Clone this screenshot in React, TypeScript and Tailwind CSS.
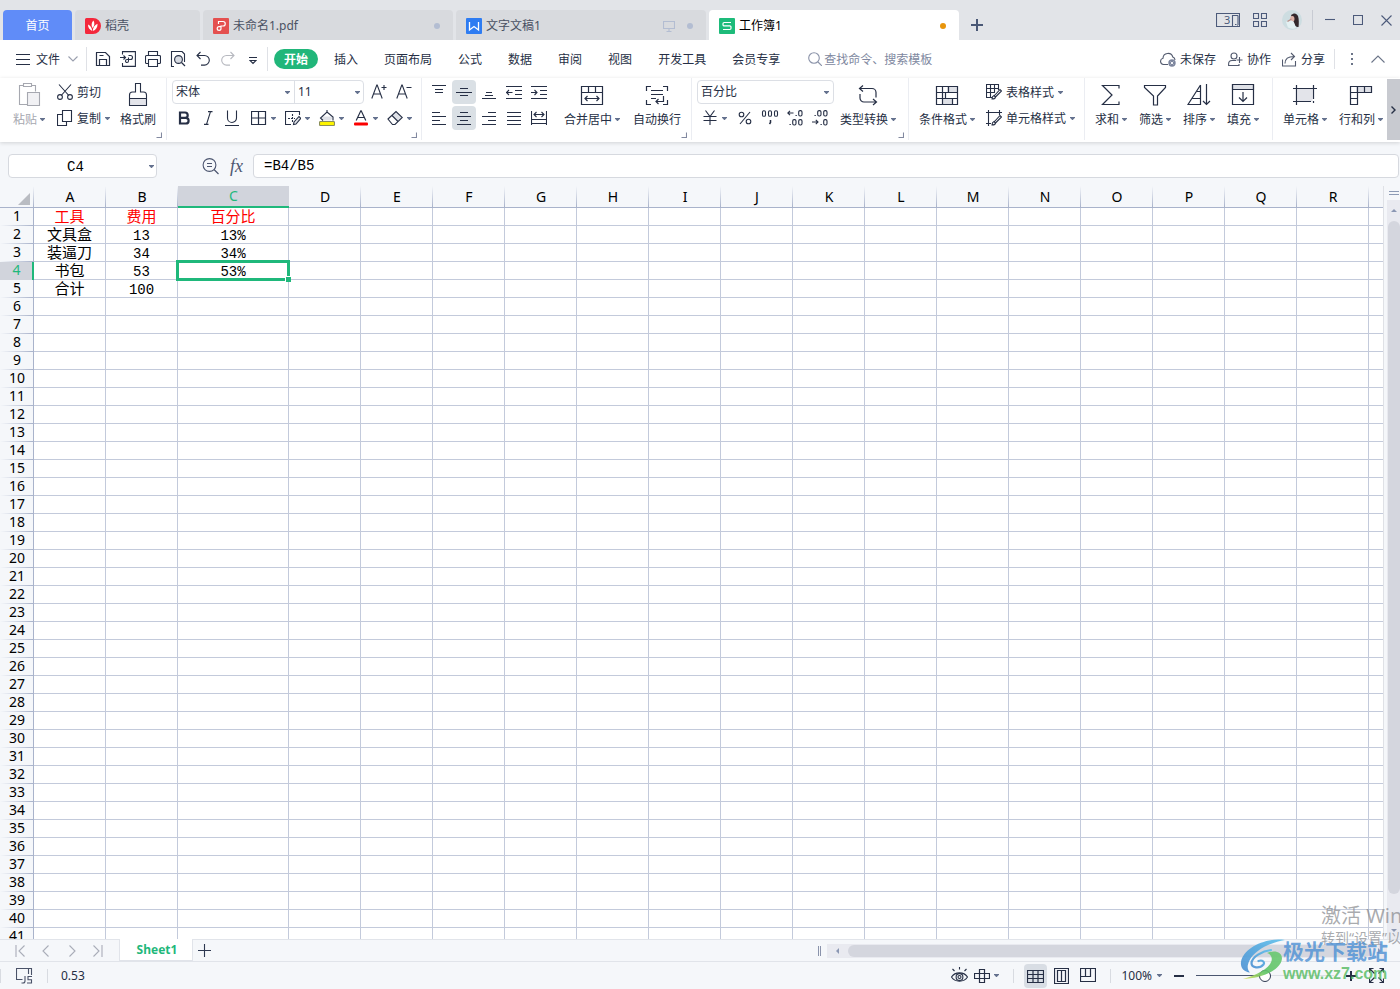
import React from 'react';

type IconProps = { w?: number; h?: number; className?: string; children: React.ReactNode };

const Icon = ({ w = 16, h = w, className = '', children }: IconProps) => (
  <svg
    width={w}
    height={h}
    viewBox={`0 0 ${w} ${h}`}
    fill="none"
    stroke="currentColor"
    strokeWidth="1.1"
    className={`shrink-0 ${className}`}
    aria-hidden="true"
  >
    {children}
  </svg>
);

const Caret = ({ className = '' }: { className?: string }) => (
  <svg width="5" height="3" viewBox="0 0 5 3" className={`shrink-0 ${className}`} fill="#64718e" aria-hidden="true">
    <path d="M0 0h5v.8L2.8 3h-.6L0 .8z" />
  </svg>
);

const Big = ({ icon, label, caret = true, muted = false }: { icon: React.ReactNode; label: string; caret?: boolean; muted?: boolean }) => (
  <button className={`flex shrink-0 flex-col items-center gap-1 pt-1 ${muted ? 'text-[#a6a8b0]' : 'text-[#262f45]'}`}>
    {icon}
    <span className="flex items-center gap-[3px] whitespace-nowrap leading-4">
      {label}
      {caret && <Caret />}
    </span>
  </button>
);

const Row = ({ icon, label, caret = true }: { icon: React.ReactNode; label: string; caret?: boolean }) => (
  <button className="flex h-6 items-center gap-1 whitespace-nowrap">
    {icon}
    {label}
    {caret && <Caret />}
  </button>
);

const Small = ({ children, label, active = false }: { children: React.ReactNode; label: string; active?: boolean }) => (
  <button aria-label={label} className={`flex h-6 w-6 shrink-0 items-center justify-center rounded-sm ${active ? 'bg-[#dae0e5]' : ''}`}>
    {children}
  </button>
);

const Split = ({ children, label }: { children: React.ReactNode; label: string }) => (
  <button aria-label={label} className="flex h-6 w-[34px] shrink-0 items-center justify-center gap-1">
    {children}
    <Caret />
  </button>
);

const Group = ({ className, launcher = false, children }: { className: string; launcher?: boolean; children: React.ReactNode }) => (
  <div className={`relative flex h-[62px] shrink-0 items-start border-r border-[#ebedf2] pt-px ${className}`}>
    {children}
    {launcher && (
      <button aria-label="更多设置" className="absolute right-1 bottom-0.5">
        <Icon w={6} className="text-[#8289a0]">
          <path d="M.5 5.5h5v-5" />
        </Icon>
      </button>
    )}
  </div>
);

const Lines = ({ rows }: { rows: [number, number, number][] }) => (
  <Icon>
    <path d={rows.map(([x1, x2, y]) => `M${x1} ${y}.5H${x2}`).join('')} strokeWidth="1.2" />
  </Icon>
);

const ribbonSelect =
  "h-full w-full appearance-none bg-transparent pl-[3px] font-['Noto_Sans','Noto_Sans_CJK_SC',sans-serif] text-xs text-[#262f45] outline-none";

function TitleBar() {
  const tab = 'flex h-[30px] shrink-0 items-center rounded-t bg-[#d8dade] pt-0.5 text-[#4a5163]';
  return (
    <header className="flex h-10 shrink-0 items-end bg-[#e2e4e8] pl-[3px]">
      <nav className="flex gap-[3px]">
        <button className="h-[30px] w-[69px] rounded-t bg-[#608cf8] pt-0.5 text-white">首页</button>
        <button className={`${tab} w-[125px] gap-1 pl-2.5`}>
          <svg width="16" height="16" viewBox="0 0 16 16" className="shrink-0">
            <path d="M1.5 0H8a8 8 0 1 1 0 16H1.5A1.5 1.5 0 0 1 0 14.5V1.5A1.5 1.5 0 0 1 1.5 0z" fill="#f4283c" />
            <path d="M7.2 13C4.500 11.500 3 10 3 6.500 5.500 7.500 7 10 7.200 13zM7.400 10C6 7 6.500 4.500 8.500 2.500 10 5.500 9.500 8 7.400 10zM7.800 13C8 9.500 9.500 7 12.500 5.800 12.800 9.500 11 12 7.800 13z" fill="#fff" />
          </svg>
          稻壳
        </button>
        <button className={`${tab} w-[250px] gap-1 pr-[13px] pl-2.5`}>
          <svg width="16" height="16" viewBox="0 0 16 16" className="shrink-0">
            <rect width="16" height="16" rx="1" fill="#e4504f" />
            <path d="M5.5 6V3.500H10a2.200 2.200 0 0 1 0 4.500H8v2.500A1.900 1.900 0 1 1 6.100 8.600H8" fill="none" stroke="#fff" strokeWidth="1.200" />
          </svg>
          未命名1.pdf
          <i className="ml-auto h-1.5 w-1.5 rounded-full bg-[#b3bdd2]" />
        </button>
        <button className={`${tab} w-[250px] gap-1 pr-[13px] pl-2.5`}>
          <svg width="16" height="16" viewBox="0 0 16 16" className="shrink-0">
            <rect width="16" height="16" rx="1" fill="#2e7cf2" />
            <path d="M3.500 4v8L8 8.500l4.500 3.500V4" fill="none" stroke="#fff" strokeWidth="1.300" />
          </svg>
          文字文稿1
          <Icon w={12} className="ml-auto text-[#b3bdd2]">
            <path d="M.5 1.500h11v7H.5zM6 8.500v3M3.500 11.500h5" />
          </Icon>
          <i className="ml-2 h-1.5 w-1.5 rounded-full bg-[#b3bdd2]" />
        </button>
        <button className="flex h-[30px] w-[250px] shrink-0 items-center gap-1 rounded-t bg-white pt-0.5 pr-[13px] pl-2.5 text-black">
          <svg width="16" height="16" viewBox="0 0 16 16" className="shrink-0">
            <rect width="16" height="16" rx="1" fill="#1dbb7a" />
            <path d="M12 4.500H5.200a1.200 1.200 0 0 0-1.200 1.200v1a1.200 1.200 0 0 0 1.200 1.200h5.600A1.200 1.200 0 0 1 12 9.100v1.200a1.200 1.200 0 0 1-1.200 1.200H4" fill="none" stroke="#fff" strokeWidth="1.200" />
          </svg>
          工作簿1
          <i className="ml-auto h-1.5 w-1.5 rounded-full bg-[#e8950c]" />
        </button>
      </nav>
      <button aria-label="新建标签" className="mb-[9px] ml-3 text-[#4a5876]">
        <Icon w={12}>
          <path d="M6 0v12M0 6h12" strokeWidth="2" />
        </Icon>
      </button>
      <div className="mr-2 ml-auto flex h-10 items-center text-[#4c5a7a]">
        <button aria-label="窗口切换">
          <Icon w={24} h={14}>
            <path d="M.5.5h23v13H.5zM16.500 13V2.500h5.500M22 2.500V13M19 11.500h1.500" />
            <text x="8" y="11" fontSize="11" fill="#4c5a7a" stroke="none" fontFamily="Noto Sans">3</text>
          </Icon>
        </button>
        <button aria-label="应用" className="ml-[13px]">
          <Icon w={14}>
            <path d="M.5.5h5v5h-5zM8.500.5h5v5h-5zM.5 8.500h5v5h-5zM8.500 8.500h5v5h-5z" />
          </Icon>
        </button>
        <button aria-label="账户" className="ml-[15px]">
          <svg width="20" height="20" viewBox="0 0 20 20">
            <circle cx="10" cy="10" r="10" fill="#cddde1" />
            <path d="M9 5c3-2.500 5.500-2 7 1 1 3 1 8 .5 11-2 .5-3.500-1-4.500-4z" fill="#33282c" />
            <path d="M9 6.500c2-1 3.500 0 3.500 2.500S11 12 9.500 11.500 7.500 7.500 9 6.500z" fill="#dcb3a8" />
            <path d="M4 12c3-2 6-2 8 .5l2 5.500a10 10 0 0 1-8-.5z" fill="#e3f0f2" />
            <path d="M5.500 11.500L9.500 9" stroke="#b98c86" strokeWidth="1.300" />
          </svg>
        </button>
        <i className="ml-2.5 h-5 w-px bg-[#c8cbd3]" />
        <button aria-label="最小化" className="ml-3">
          <Icon w={10}>
            <path d="M0 4.500h10" />
          </Icon>
        </button>
        <button aria-label="最大化" className="ml-[18px]">
          <Icon w={10}>
            <path d="M.5.5h9v9h-9z" />
          </Icon>
        </button>
        <button aria-label="关闭" className="ml-[18px]">
          <Icon w={11}>
            <path d="M.5.5l10 10M10.500.5l-10 10" />
          </Icon>
        </button>
      </div>
    </header>
  );
}

function MenuBar() {
  const tabs = ['开始', '插入', '页面布局', '公式', '数据', '审阅', '视图', '开发工具', '会员专享'];
  return (
    <div className="flex h-[38px] shrink-0 items-center whitespace-nowrap bg-white pr-[15px] pl-4 font-['Noto_Sans_CJK_SC',sans-serif]">
      <button className="flex items-center gap-1.5">
        <Icon w={14}>
          <path d="M0 2.500h14M0 7.500h14M0 12.500h14" />
        </Icon>
        文件
        <Icon w={10} h={6} className="ml-0.5 text-[#9a9fae]">
          <path d="M.5.5L5 5 9.500.5" />
        </Icon>
      </button>
      <i className="ml-2 h-6 w-px bg-[#dfe1e6]" />
      <div className="ml-2 flex items-center gap-[9px]">
        <button aria-label="保存">
          <Icon>
            <path d="M1 1.500h9.500l4 4v9H1.500v-13M4.500 14V8.500h7V14M4.500 4.500h4" strokeWidth="1.200" />
          </Icon>
        </button>
        <button aria-label="输出为PDF">
          <Icon>
            <path d="M2.500 3.500V.6h12.900v14.800H2.500V12M0 6.500h5.500M3.500 4.500l2 2-2 2M8.500 4.500h2a2 2 0 0 1 0 4h-2v1.500a1.500 1.500 0 1 1-1.500-1.500h1.500V6.500" />
          </Icon>
        </button>
        <button aria-label="打印">
          <Icon>
            <path d="M3.500 4.500v-4h9v4M3.500 12.500h-2a1 1 0 0 1-1-1v-6a1 1 0 0 1 1-1h13a1 1 0 0 1 1 1v6a1 1 0 0 1-1 1h-2M3.500 8.500h9v7h-9z" />
          </Icon>
        </button>
        <button aria-label="打印预览">
          <Icon>
            <path d="M4 15.500H1.500V.5H12L14.500 3v8" />
            <circle cx="8.500" cy="8.500" r="3.900" fill="#d8dbe2" />
            <path d="M11.500 11.500l3.500 3.500" strokeWidth="1.300" />
          </Icon>
        </button>
        <button aria-label="撤销">
          <Icon>
            <path d="M5.500 1L2 4.500 5.500 8M2 4.500h7.500a4.800 4.800 0 0 1 0 9.600H6" />
          </Icon>
        </button>
        <button aria-label="恢复" className="text-[#b7b9c0]">
          <Icon>
            <path d="M10.500 1L14 4.500 10.500 8M14 4.500H6.500a4.800 4.800 0 0 0 0 9.600H10" />
          </Icon>
        </button>
        <button aria-label="自定义" className="flex w-4 justify-center pt-1">
          <Icon w={8}>
            <path d="M0 .5h8M1 3.500h6L4 6.500z" />
          </Icon>
        </button>
      </div>
      <i className="ml-1.5 h-6 w-px bg-[#dfe1e6]" />
      <nav className="ml-1.5 flex gap-1.5">
        {tabs.map((t, i) => (
          <button key={t} className={`h-5 rounded-full px-2.5 ${i === 0 ? 'bg-[#21b67a] font-bold text-white' : ''}`}>
            {t}
          </button>
        ))}
      </nav>
      <label className="ml-[18px] flex items-center gap-0.5 text-[#8b93a9]">
        <Icon w={14}>
          <circle cx="6" cy="6" r="5.300" />
          <path d="M10 10l4 4" />
        </Icon>
        <input aria-label="搜索" placeholder="查找命令、搜索模板" className="w-32 bg-transparent outline-none placeholder:text-[#8088a0]" />
      </label>
      <div className="ml-auto flex items-center">
        <button className="flex items-center gap-1">
          <Icon className="text-[#525a6e]">
            <path d="M8 13.500H3.500a3.200 3.200 0 0 1-.5-6.300 5 5 0 0 1 9.800-1.200 3.200 3.200 0 0 1 2.200 3" />
            <circle cx="12" cy="12" r="3.700" fill="#7d869e" stroke="none" />
            <path d="M10.700 10.700l2.600 2.600M13.300 10.700l-2.600 2.600" stroke="#fff" strokeWidth=".9" />
          </Icon>
          未保存
        </button>
        <button className="ml-3 flex items-center gap-1">
          <Icon w={15} className="text-[#525a6e]">
            <circle cx="6" cy="4" r="3" />
            <path d="M8 8.500H4A3.500 3.500 0 0 0 .6 12v1.500H11V12M11.500 5v6M8.500 8h6" />
          </Icon>
          协作
        </button>
        <button className="ml-[11px] flex items-center gap-1">
          <Icon w={15} className="text-[#525a6e]">
            <path d="M.5 7.500v6.500h13V9M3 11.500C3 6.500 6 4.500 12 4.500M9 1l3.500 3.500L9 8" />
          </Icon>
          分享
        </button>
        <i className="ml-[9px] h-5 w-px bg-[#dfe1e6]" />
        <button aria-label="更多" className="ml-4">
          <svg width="2" height="12" viewBox="0 0 2 12" fill="#6b7488">
            <path d="M0 0h2v2H0zM0 5h2v2H0zM0 10h2v2H0z" />
          </svg>
        </button>
        <button aria-label="收起功能区" className="ml-[18px] text-[#6b7488]">
          <Icon w={14} h={8}>
            <path d="M.5 7.500L7 1l6.500 6.500" />
          </Icon>
        </button>
      </div>
    </div>
  );
}

function Ribbon() {
  return (
    <div className="z-10 flex h-16 shrink-0 overflow-hidden bg-white font-['Noto_Sans_CJK_SC',sans-serif] shadow-[0_1px_4px_rgba(0,0,0,0.15)]">
      <Group className="w-[167px] pl-[13px]" launcher>
        <Big
          muted
          label="粘贴"
          icon={
            <Icon w={24}>
              <path d="M6.500 2.500H2.500v19h8M14.500 2.500h4v6" />
              <path d="M6.500.5h8v3h-8z" />
              <path d="M10.500 9.500h12v13h-12z" fill="#f1f1f4" />
            </Icon>
          }
        />
        <div className="mt-px ml-3 flex flex-col gap-0.5">
          <Row
            label="剪切"
            caret={false}
            icon={
              <Icon>
                <path d="M2 .5l9.800 11M14 .5L4.200 11.500" />
                <circle cx="3" cy="13" r="2.400" />
                <circle cx="13" cy="13" r="2.400" />
              </Icon>
            }
          />
          <Row
            label="复制"
            icon={
              <Icon>
                <path d="M5.500.5h9v11h-9zM5.500 4.500h-5v11h9v-4" />
              </Icon>
            }
          />
        </div>
        <div className="ml-2.5 flex">
          <Big
            label="格式刷"
            caret={false}
            icon={
              <Icon w={24}>
                <path d="M3.500 15.500h17v7h-17z" fill="#e3e4ea" stroke="none" />
                <path d="M9.500.5h5v8.500h3a3 3 0 0 1 3 3v10.500h-17V12a3 3 0 0 1 3-3h3zM3.500 15.500h17" />
              </Icon>
            }
          />
        </div>
      </Group>

      <Group className="w-[255px] pl-[5px]" launcher>
        <div className="mt-px flex flex-col gap-0.5">
          <div className="flex h-6 items-center">
            <div className="flex h-6 w-[192px] rounded-sm border border-[#dcdfe5]">
              <div className="relative w-[122px] shrink-0 border-r border-[#dcdfe5]">
                <select aria-label="字体" className={ribbonSelect}>
                  <option>宋体</option>
                </select>
                <Caret className="pointer-events-none absolute top-[10px] right-1" />
              </div>
              <div className="relative flex-1">
                <select aria-label="字号" className={ribbonSelect}>
                  <option>11</option>
                </select>
                <Caret className="pointer-events-none absolute top-[10px] right-[3px]" />
              </div>
            </div>
            <div className="ml-[3px] flex gap-px">
              <Small label="增大字号">
                <Icon>
                  <path d="M.8 14.500L5.800 1h.4l5 13.500M2.500 10h7M10.500 3.500h5M13 1v5" />
                </Icon>
              </Small>
              <Small label="减小字号">
                <Icon>
                  <path d="M.8 14.500L5.800 1h.4l5 13.500M2.500 10h7M10.500 3.500h5" />
                </Icon>
              </Small>
            </div>
          </div>
          <div className="flex">
            <Small label="加粗">
              <Icon w={14}>
                <path d="M3 1.500h5a2.700 2.700 0 0 1 0 5.400H3zM3 6.900h5.800a2.800 2.800 0 0 1 0 5.600H3z" strokeWidth="2.200" />
              </Icon>
            </Small>
            <Small label="倾斜">
              <Icon w={14}>
                <path d="M7 .6h4.500M3 13.400h4.500M9.500.6L5.500 13.400" />
              </Icon>
            </Small>
            <Small label="下划线">
              <Icon w={16}>
                <path d="M3.500.5V8a4.500 4.500 0 0 0 9 0V.5M1 15.500h14" />
              </Icon>
            </Small>
            <div className="ml-0.5 flex">
              <Split label="边框">
                <Icon>
                  <path d="M.5 1.500h14v13H.5zM7.500 1.500v13M.5 8h14" strokeWidth="1.200" />
                </Icon>
              </Split>
              <Split label="绘图边框">
                <Icon>
                  <path d="M6 14.500H.5v-13h14V5" />
                  <path d="M7.500 4v8M3 8.500h7" strokeDasharray="2 1" />
                  <path d="M8.500 14.500l.5-2.500L14 6.500l1.800 1.800L11 14z" fill="#dfe1e7" />
                </Icon>
              </Split>
              <Split label="填充颜色">
                <Icon>
                  <path d="M3.500 6.500h9.500v2.500l-1.500 1.500h-7L3 9z" fill="#dfe1e7" stroke="none" />
                  <path d="M4 10.500L1.500 8 8 2l6 5v3.500M8 2V0" />
                  <rect x=".5" y="11.500" width="15" height="4" rx="1" fill="#fdf400" stroke="#8b8f5a" />
                </Icon>
              </Split>
              <Split label="字体颜色">
                <Icon>
                  <path d="M3.200 10.500L7.800.8h.4l4.600 9.700M5 7.500h6" strokeWidth="1.200" />
                  <rect x="1" y="12.500" width="14" height="3" rx="1" fill="#fb0000" stroke="none" />
                </Icon>
              </Split>
              <Split label="清除">
                <Icon>
                  <path d="M5 5.500L9 1.500 15.300 7.500 11 11.500z" fill="#dfe1e7" stroke="none" />
                  <path d="M1 9L9 1.500 15.300 7.500 8 14.500H5.500zM5 5.500l6 6" />
                </Icon>
              </Split>
            </div>
          </div>
        </div>
      </Group>

      <Group className="w-[270px] pl-[5px]" launcher>
        <div className="mt-px grid grid-cols-5 gap-x-px gap-y-0.5">
          <Small label="顶端对齐">
            <Lines rows={[[1, 15, 1], [4, 12, 5], [4, 12, 8]]} />
          </Small>
          <Small label="垂直居中" active>
            <Lines rows={[[4, 12, 4], [0, 16, 8], [4, 12, 11]]} />
          </Small>
          <Small label="底端对齐">
            <Lines rows={[[5, 11, 8], [4, 12, 11], [1, 15, 14]]} />
          </Small>
          <Small label="减少缩进">
            <Icon>
              <path d="M0 2.500h16M9 6.500h7M9 10.500h7M0 14.500h16M0 8.500h6.500M3 6L.5 8.500 3 11" />
            </Icon>
          </Small>
          <Small label="增加缩进">
            <Icon>
              <path d="M0 2.500h16M9 6.500h7M9 10.500h7M0 14.500h16M0 8.500h6M3.500 6L6 8.500 3.500 11" />
            </Icon>
          </Small>
          <Small label="左对齐">
            <Lines rows={[[1, 15, 14], [1, 9, 10], [1, 15, 6], [1, 9, 2]]} />
          </Small>
          <Small label="水平居中" active>
            <Lines rows={[[1, 15, 14], [4, 12, 10], [1, 15, 6], [4, 12, 2]]} />
          </Small>
          <Small label="右对齐">
            <Lines rows={[[1, 15, 14], [7, 15, 10], [1, 15, 6], [7, 15, 2]]} />
          </Small>
          <Small label="两端对齐">
            <Lines rows={[[1, 15, 14], [1, 15, 10], [1, 15, 6], [1, 15, 2]]} />
          </Small>
          <Small label="分散对齐">
            <Icon>
              <path d="M.5 1v14M15.500 1v14M1 9.500h14M1 13.500h14M3 4.500h10M5.500 2L3 4.500 5.500 7M10.500 2L13 4.500 10.500 7" />
            </Icon>
          </Small>
        </div>
        <div className="ml-[13px] flex gap-[13px]">
          <Big
            label="合并居中"
            icon={
              <Icon w={24}>
                <path d="M1.500 3.500h21v18h-21zM1.500 9.500h21M8.500 3.500v6M15.500 3.500v6M5 15.500h14M7.500 13L5 15.500 7.500 18M16.500 13l2.500 2.500-2.500 2.500" strokeWidth="1.200" />
              </Icon>
            }
          />
          <Big
            label="自动换行"
            caret={false}
            icon={
              <Icon w={24}>
                <path d="M6 3.500H1.500V8M18 3.500h4.500V8M6 21.500H1.500V17M18 21.500h4.500V17M6 7.500h12M6 11.500h12M6 15.500h5M18.500 13v5.500H11M13.500 16L11 18.500l2.500 2.500" strokeWidth="1.200" />
              </Icon>
            }
          />
        </div>
      </Group>

      <Group className="w-[217px] pl-[5px]" launcher>
        <div className="mt-px flex flex-col gap-0.5">
          <div className="relative h-6 w-[137px] rounded-sm border border-[#dcdfe5]">
            <select aria-label="数字格式" className={ribbonSelect}>
              <option>百分比</option>
            </select>
            <Caret className="pointer-events-none absolute top-[10px] right-1" />
          </div>
          <div className="flex gap-px">
            <Split label="货币">
              <Icon>
                <path d="M3.500.5L8 6.500l4.500-6M1.500 6.500h13M1.500 10.500h13M8 6.500v8.500" />
              </Icon>
            </Split>
            <div className="flex gap-px pl-px">
              <Small label="百分比样式">
                <Icon>
                  <circle cx="4.500" cy="4.500" r="2.300" />
                  <circle cx="11.500" cy="11.500" r="2.300" />
                  <path d="M13 2L3 14" />
                </Icon>
              </Small>
              <Small label="千位分隔">
                <Icon w={18} h={16}>
                  <rect x="1.500" y=".7" width="3" height="5.600" rx="1.400" />
                  <rect x="7.500" y=".7" width="3" height="5.600" rx="1.400" />
                  <rect x="13.500" y=".7" width="3" height="5.600" rx="1.400" />
                  <path d="M9.500 10v2.500L8.500 14" strokeWidth="1.500" />
                </Icon>
              </Small>
              <Small label="增加小数位">
                <Icon>
                  <rect x="11.700" y=".6" width="3.300" height="5.400" rx="1.400" />
                  <rect x="5.700" y="9.600" width="3.300" height="5.400" rx="1.400" />
                  <rect x="11.700" y="9.600" width="3.300" height="5.400" rx="1.400" />
                  <path d="M8.500 5.500h1.300M2.500 14.500h1.300M.5 3h6M3 .8L.8 3 3 5.200" />
                </Icon>
              </Small>
              <Small label="减少小数位">
                <Icon>
                  <rect x="5.700" y=".6" width="3.300" height="5.400" rx="1.400" />
                  <rect x="11.700" y=".6" width="3.300" height="5.400" rx="1.400" />
                  <rect x="11.700" y="9.600" width="3.300" height="5.400" rx="1.400" />
                  <path d="M2.500 5.500h1.300M8.500 14.500h1.300M0 12h6M3.800 9.800L6 12l-2.200 2.200" />
                </Icon>
              </Small>
            </div>
          </div>
        </div>
        <div className="ml-1.5 flex">
          <Big
            label="类型转换"
            icon={
              <Icon w={24}>
                <path d="M7 2.500L3.500 5.500 7 8.500M3.500 5.500H16a4 4 0 0 1 4 4v5M17 22l3.500-3L17 16M20.500 19H8a4 4 0 0 1-4-4v-4" strokeWidth="1.200" />
              </Icon>
            }
          />
        </div>
      </Group>

      <Group className="w-[176px] pl-2.5">
        <Big
          label="条件格式"
          icon={
            <Icon w={24}>
              <path d="M8 15h9v6H8zM12 3h10v6H12z" fill="#dfe1e7" stroke="none" />
              <path d="M1.500 3.500h21v18h-21zM1.500 9.500h21M1.500 15.500h21M7.500 3.500v18M13.500 3.500v6M10.500 9.500v6M17.500 15.500v6" strokeWidth="1.200" />
            </Icon>
          }
        />
        <div className="mt-px ml-[11px] flex flex-col gap-0.5">
          <Row
            label="表格样式"
            icon={
              <Icon>
                <path d="M6 13.500H.5V.5h12V6M.5 4.500h12M.5 8.500H9M4.500.5v13M8.500.5v8" />
                <path d="M6 15c0-2 .5-3 2-3.500l1.500 1.500C9.500 14.500 8 15 6 15zM8.500 11.500L14 5.500l1.500 1.500-6 6" fill="#fff" />
              </Icon>
            }
          />
          <Row
            label="单元格样式"
            icon={
              <Icon>
                <path d="M0 2.500h16M2.500 0v16M0 13.500h5M13.500 0v5" />
                <path d="M6 15c0-2 .5-3 2-3.500l1.500 1.500C9.500 14.500 8 15 6 15zM8.500 11.500L14 5.500l1.500 1.500-6 6" fill="#fff" />
              </Icon>
            }
          />
        </div>
      </Group>

      <Group className="w-[188px] gap-3 pl-2.5">
        <Big
          label="求和"
          icon={
            <Icon w={24}>
              <path d="M20 5.500V2.500H3.500l9.500 9.500-9.500 9.500H20v-3" strokeWidth="1.200" />
            </Icon>
          }
        />
        <Big
          label="筛选"
          icon={
            <Icon w={24}>
              <path d="M1.500 2.500h21v2l-8 8.500v9h-4V13l-9-8.500z" strokeWidth="1.200" />
            </Icon>
          }
        />
        <Big
          label="排序"
          icon={
            <Icon w={24}>
              <path d="M13.500 2v19.500H1L13.500 2M10 8.500h3.500M5.500 15.500h8M19.500 1v20M16 18l3.500 3.500L23 18" strokeWidth="1.200" />
            </Icon>
          }
        />
        <Big
          label="填充"
          icon={
            <Icon w={24}>
              <path d="M1.500 1.500h21v5h-21z" fill="#dfe1e7" />
              <path d="M1.500 1.500h21v20h-21zM12 9v9.500M8 14.500l4 4 4-4" strokeWidth="1.200" />
            </Icon>
          }
        />
      </Group>

      <div className="flex shrink-0 items-start gap-3 pt-px pl-2.5">
        <Big
          label="单元格"
          icon={
            <Icon w={24}>
              <path d="M4.500 5.500h15v13h-15z" fill="#e3e4ea" stroke="none" />
              <path d="M0 5.500h24M0 18.500h18M3.500 2v20M20.500 2v14M20.500 18v2" strokeWidth="1.200" />
            </Icon>
          }
        />
        <Big
          label="行和列"
          icon={
            <Icon w={24}>
              <path d="M7 3h15v6H7z" fill="#dfe1e7" stroke="none" />
              <path d="M1.500 3.500h21v6h-21zM8.500 3.500v18h-7v-18M15.500 3.500v6M1.500 15.500h7" strokeWidth="1.200" />
            </Icon>
          }
        />
      </div>
      <button aria-label="向右滚动" className="mt-px ml-auto flex h-[61px] w-[13px] shrink-0 items-center justify-center bg-[#c8cad0]">
        <Icon w={5} h={8}>
          <path d="M.5.5L4 4 .5 7.500" strokeWidth="1.400" />
        </Icon>
      </button>
    </div>
  );
}

function FormulaBar() {
  const box = 'h-6 rounded-sm border border-[#d6d9df] bg-white font-["Liberation_Mono","Noto_Sans_CJK_SC",monospace] text-sm text-black outline-none';
  return (
    <div className="flex h-11 shrink-0 items-center pt-1 pl-2">
      <div className="relative w-[149px]">
        <input aria-label="名称框" defaultValue="C4" className={`${box} w-full pt-0.5 pr-3.5 text-center`} />
        <Caret className="pointer-events-none absolute top-[11px] right-[3px]" />
      </div>
      <button aria-label="浏览公式结果" className="ml-[45px] text-[#4d5670]">
        <Icon w={17}>
          <circle cx="7.500" cy="7" r="6.400" />
          <path d="M5 5.500h5M5 8.500h5M12 11.500l4.500 4.500" strokeWidth="1.200" />
        </Icon>
      </button>
      <button aria-label="插入函数" className="ml-[9px] w-[17px] font-['Liberation_Serif',serif] text-lg leading-6 text-[#4d5670] italic">
        fx
      </button>
      <input aria-label="编辑栏" defaultValue="=B4/B5" className={`${box} mr-px ml-2 min-w-0 flex-1 pl-2.5`} />
    </div>
  );
}

const COLUMNS = 'ABCDEFGHIJKLMNOPQR'.split('');
const ROW_COUNT = 41;
const ROWS: string[][] = [
  ['工具', '费用', '百分比'],
  ['文具盒', '13', '13%'],
  ['装逼刀', '34', '34%'],
  ['书包', '53', '53%'],
  ['合计', '100', ''],
];

function Grid() {
  return (
    <main className="flex min-h-0 flex-1">
      <div className="min-w-0 flex-1 overflow-hidden">
        <table className="w-full table-fixed border-separate border-spacing-0 text-center text-sm text-black">
          <colgroup>
            <col className="w-[34px]" />
            {COLUMNS.map((c) => (
              <col key={c} className={c === 'C' ? 'w-[111px]' : 'w-[72px]'} />
            ))}
            <col />
          </colgroup>
          <thead>
            <tr className="h-[22px]">
              <th className="border-b border-[#a9b3cb] bg-[linear-gradient(to_bottom,#f5f7fa,#a9b3cb)] bg-[length:1px_100%] bg-right bg-no-repeat p-0">
                <svg width="12" height="12" className="mt-1 mr-1 ml-auto block" viewBox="0 0 12 12" fill="#b9bcc2">
                  <path d="M12 0v12H0z" />
                </svg>
              </th>
              {COLUMNS.map((c) => (
                <th
                  key={c}
                  className={`p-0 leading-5 font-normal ${
                    c === 'C'
                      ? 'border-b-2 border-[#1fb87b] bg-[#d1d4dc] text-[#1fb87b]'
                      : 'border-b border-[#a9b3cb] bg-[linear-gradient(to_bottom,#f5f7fa,#a9b3cb)] bg-[length:1px_100%] bg-right bg-no-repeat'
                  }`}
                >
                  {c}
                </th>
              ))}
              <th className="border-b border-[#a9b3cb] p-0" />
            </tr>
          </thead>
          <tbody>
            {Array.from({ length: ROW_COUNT }, (_, r) => (
              <tr key={r} className="h-[18px]">
                <th
                  className={`p-0 pl-px align-top leading-4 font-normal ${
                    r === 3
                      ? 'border-r-2 border-[#1fb87b] bg-[#d1d4dc] text-[#1fb87b]'
                      : 'border-r border-[#a9b3cb] bg-[linear-gradient(to_right,#f5f7fa,#a9b3cb)] bg-[length:100%_1px] bg-bottom bg-no-repeat'
                  }`}
                >
                  {r + 1}
                </th>
                {COLUMNS.map((c, i) => {
                  const value = ROWS[r]?.[i] ?? '';
                  const numeric = /^\d/.test(value);
                  return (
                    <td
                      key={c}
                      className={`relative border-r border-b border-[#c3cadb] bg-white p-0 align-top ${r === 0 ? 'text-[#f00]' : ''} ${
                        numeric ? 'pt-1 font-["Liberation_Mono",monospace] leading-[13px]' : 'font-["Noto_Sans_CJK_SC",sans-serif] text-[15px] leading-[15px]'
                      }`}
                    >
                      {value}
                      {r === 3 && c === 'C' && (
                        <span className="pointer-events-none absolute -inset-0.5 z-10 border-[3px] border-[#1fb87b]">
                          <i className="absolute -right-1 -bottom-1 h-1.5 w-1.5 border-t border-l border-white bg-[#1fb87b]" />
                        </span>
                      )}
                    </td>
                  );
                })}
                <td className="border-b border-[#c3cadb] bg-white p-0" />
              </tr>
            ))}
          </tbody>
        </table>
      </div>
      <div className="flex w-[17px] shrink-0 flex-col items-center border-l border-[#dfe1e6] bg-[#f5f7fa] pl-[3px]">
        <svg width="10" height="4" viewBox="0 0 10 4" className="mt-[5px] mb-[5px] shrink-0" fill="#8d9bb5">
          <path d="M0 0h10v1H0zM0 3h10v1H0z" />
        </svg>
        <div className="flex min-h-0 w-full flex-1 flex-col items-center bg-[#e9eaf0]">
          <button aria-label="向上滚动" className="flex h-[21px] w-full items-center justify-center">
            <svg width="6" height="3" viewBox="0 0 6 3" fill="#8b97b3">
              <path d="M3 0l3 3H0z" />
            </svg>
          </button>
          <div className="w-3 flex-1 rounded-full bg-[#d4d6de]" />
          <button aria-label="向下滚动" className="flex h-[45px] w-full items-end justify-center pb-[7px]">
            <svg width="6" height="3" viewBox="0 0 6 3" fill="#8b97b3">
              <path d="M0 0h6L3 3z" />
            </svg>
          </button>
        </div>
      </div>
    </main>
  );
}

function SheetTabs() {
  return (
    <div className="flex h-[23px] shrink-0 items-center border-y border-[#e1e4ea] bg-[#f5f7fa]">
      <div className="flex w-[119px] shrink-0 gap-[14px] pl-[15px] text-[#a9adb8]">
        <button aria-label="第一张">
          <Icon w={12}>
            <path d="M1 0v12M9.500.5L4 6l5.500 5.500" />
          </Icon>
        </button>
        <button aria-label="上一张">
          <Icon w={12}>
            <path d="M7.500.5L2 6l5.500 5.500" />
          </Icon>
        </button>
        <button aria-label="下一张">
          <Icon w={12}>
            <path d="M2.500.5L8 6l-5.500 5.500" />
          </Icon>
        </button>
        <button aria-label="最后一张">
          <Icon w={12}>
            <path d="M.5.5L6 6 .5 11.500M9 0v12" />
          </Icon>
        </button>
      </div>
      <button className="-my-px h-[23px] w-[74px] shrink-0 border-x border-b-2 border-[#e1e4ea] bg-white pt-px pl-0.5 font-bold text-[#1fb87b]">
        Sheet1
      </button>
      <button aria-label="新建工作表" className="ml-[5px] text-[#2d3850]">
        <Icon w={13}>
          <path d="M6.500 0v13M0 6.500h13" />
        </Icon>
      </button>
      <div className="ml-auto flex h-[14px] w-[582px] items-center">
        <svg width="3" height="10" viewBox="0 0 3 10" className="mr-1.5 shrink-0" fill="#8a93ab">
          <path d="M0 0h1v10H0zM2 0h1v10H2z" />
        </svg>
        <div className="mr-[13px] flex h-[14px] flex-1 items-center bg-[#e9eaf0]">
          <button aria-label="向左滚动" className="flex w-[21px] justify-center">
            <svg width="3" height="6" viewBox="0 0 3 6" fill="#8b97b3">
              <path d="M3 0v6L0 3z" />
            </svg>
          </button>
          <div className="h-3 flex-1 rounded-full bg-[#d4d6de]" />
          <button aria-label="向右滚动" className="flex w-4 justify-center">
            <svg width="3" height="6" viewBox="0 0 3 6" fill="#8b97b3">
              <path d="M0 0v6l3-3z" />
            </svg>
          </button>
        </div>
      </div>
    </div>
  );
}

function StatusBar() {
  return (
    <footer className="flex h-[27px] shrink-0 items-center bg-[#f5f7fa] pr-4">
      <i className="h-[14px] w-px bg-[#d8dbe1]" />
      <button aria-label="宏" className="ml-[15px] text-[#4a5268]">
        <Icon w={17} h={16}>
          <path d="M6 11.500H.5V.5h12.500M3.500 11.500h3M12.500 6V.5h3V7M9 8v5a2 2 0 0 1-2 2H5.500M16 8.500h-4v3.200h3.500V15H11" />
        </Icon>
      </button>
      <i className="ml-3.5 h-[14px] w-px bg-[#d8dbe1]" />
      <span className="ml-[13px]">0.53</span>
      <div className="ml-auto flex items-center">
        <button aria-label="护眼模式">
          <Icon w={17}>
            <path d="M.5 10C4 4.500 13 4.500 16.500 10 13 15.500 4 15.500.5 10zM8.500 0v2.500M1.500 2l2 2M15.500 2l-2 2" />
            <circle cx="8.500" cy="10" r="3.400" />
            <circle cx="8.500" cy="10" r="1.500" />
          </Icon>
        </button>
        <button aria-label="阅读模式" className="ml-1.5 flex items-center gap-1">
          <Icon>
            <path d="M.5 5.500h15v5H.5zM5.500 1.500h5v13h-5z" strokeWidth="1.200" />
          </Icon>
          <Caret />
        </button>
        <i className="ml-3.5 h-[14px] w-px bg-[#d8dbe1]" />
        <button aria-label="普通视图" className="ml-2.5 flex h-6 w-[23px] items-center justify-center rounded-sm bg-[#d8dde4]">
          <Icon w={17} h={14}>
            <path d="M.5 1.500h16v12H.5zM.5 5.500h16M.5 9.500h16M6 1.500v12M11 1.500v12" strokeWidth="1.200" />
          </Icon>
        </button>
        <button aria-label="分页预览" className="ml-[7px]">
          <Icon w={15} h={16}>
            <path d="M.5.5h14v15H.5zM3.500 2.500h8v11h-8zM7.500 2.500v11" strokeWidth="1.200" />
          </Icon>
        </button>
        <button aria-label="页面布局" className="ml-[11px]">
          <Icon w={16} h={15}>
            <path d="M.5.5h15v13H.5zM.5 8.500h10v-8M5.500.5v8" strokeWidth="1.200" />
          </Icon>
        </button>
        <i className="ml-3.5 h-[14px] w-px bg-[#d8dbe1]" />
        <button className="ml-2.5 flex items-center gap-[5px]">
          100%
          <Caret />
        </button>
        <button aria-label="缩小" className="ml-3">
          <Icon w={10}>
            <path d="M0 5h10" strokeWidth="2" />
          </Icon>
        </button>
        <input
          type="range"
          aria-label="显示比例"
          min={0}
          max={200}
          defaultValue={100}
          className="ml-3 h-3 w-[138px] appearance-none bg-[linear-gradient(to_right,#4a5670_50%,#dcdfe5_50%)] bg-[length:100%_1px] bg-center bg-no-repeat [&::-webkit-slider-thumb]:h-3 [&::-webkit-slider-thumb]:w-3 [&::-webkit-slider-thumb]:appearance-none [&::-webkit-slider-thumb]:rounded-full [&::-webkit-slider-thumb]:border [&::-webkit-slider-thumb]:border-[#2d3850] [&::-webkit-slider-thumb]:bg-white"
        />
        <button aria-label="放大" className="ml-3">
          <Icon w={10}>
            <path d="M0 5h10M5 0v10" strokeWidth="2" />
          </Icon>
        </button>
        <button aria-label="全屏" className="ml-[13px]">
          <Icon w={15}>
            <path d="M.5 4.500v-4h4M10.500.5h4v4M.5 10.500v4h4M10.500 14.500h4v-4M.5.5l5 5M14.500.5l-5 5M.5 14.500l5-5M14.500 14.500l-5-5" strokeWidth="1.200" />
          </Icon>
        </button>
      </div>
    </footer>
  );
}

function Watermarks() {
  return (
    <div className="pointer-events-none absolute right-0 bottom-0 z-20 h-[90px] w-[160px] overflow-hidden whitespace-nowrap">
      <div className="absolute top-[5px] left-[81px] text-[#8d8f94]/75">
        <p className="text-xl leading-6">激活 Windows</p>
        <p className="text-sm leading-5">转到“设置”以激活 Windows。</p>
      </div>
      <svg width="46" height="42" viewBox="0 0 46 42" className="absolute top-10 left-0 opacity-90">
        <defs>
          <linearGradient id="swirlBlue" x1="0" y1="1" x2="1" y2="0">
            <stop offset="0" stopColor="#4a8fd2" />
            <stop offset="1" stopColor="#5cc0ec" />
          </linearGradient>
          <linearGradient id="swirlGreen" x1="0" y1="1" x2="1" y2="0">
            <stop offset="0" stopColor="#dde05a" />
            <stop offset=".4" stopColor="#5fc566" />
            <stop offset="1" stopColor="#6cc974" />
          </linearGradient>
        </defs>
        <path d="M45 1C26-2 3 9 1 23c-.8 6 3 10 9 10.500-3-3-3-7-.5-12C14 12 28 4 45 1z" fill="url(#swirlBlue)" />
        <path d="M31 11C22 12 12 18 11.500 24c0 5 8 6 12 1.500 1.500-2.500-1-5-5-3.500" fill="none" stroke="url(#swirlBlue)" strokeWidth="2.200" strokeLinecap="round" />
        <path d="M27 14c9-4 17 0 14.500 8C38 33 18 40 3 40c13-4 26-10 28.500-18 1-4-1-7-4.500-8z" fill="url(#swirlGreen)" />
      </svg>
      <div className="absolute top-10 left-[43px]">
        <p className="text-[21px] leading-6 font-bold text-[#4a8fd4]/80">极光下载站</p>
        <p className="font-['Liberation_Sans',sans-serif] text-base leading-[22px] font-bold text-[#52b95c]/80">www.xz7.com</p>
      </div>
    </div>
  );
}

export default function App() {
  return (
    <div className="relative flex h-screen flex-col overflow-hidden bg-[#f5f7fa] font-['Noto_Sans','Noto_Sans_CJK_SC',sans-serif] text-xs leading-4 text-[#262f45]">
      <TitleBar />
      <MenuBar />
      <Ribbon />
      <FormulaBar />
      <Grid />
      <SheetTabs />
      <StatusBar />
      <Watermarks />
    </div>
  );
}
